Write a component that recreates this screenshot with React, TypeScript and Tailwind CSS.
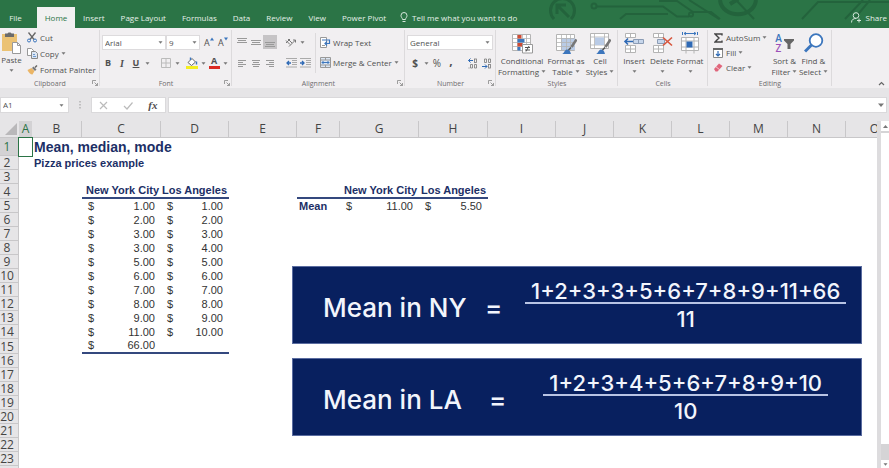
import React from "react";

type Kids = { children?: React.ReactNode };

const Caret = () => (
  <svg width="5" height="3" viewBox="0 0 5 3" className="shrink-0" aria-hidden="true">
    <path d="M0.5 0.3h4L2.5 2.7z" fill="#777" />
  </svg>
);

const Svg = ({ w, h, children }: Kids & { w: number; h: number }) => (
  <svg width={w} height={h} viewBox={`0 0 ${w} ${h}`} fill="none" className="shrink-0" aria-hidden="true">
    {children}
  </svg>
);

const Rule = () => <span className="h-3 w-px shrink-0 bg-[#dcdadc]" />;

function Group({ label, width, launcher, children }: Kids & { label: string; width: string; launcher?: boolean }) {
  return (
    <section
      aria-label={label}
      className={`relative flex shrink-0 flex-col after:absolute after:right-0 after:top-0.5 after:h-14 after:w-px after:bg-[#dcdadc] ${width}`}
    >
      <div className="h-[52px]">{children}</div>
      <div className="text-center text-[7px] leading-[8px] text-[#6f6d6f]">{label}</div>
      {launcher && (
        <button aria-label={`${label} settings`} className="absolute bottom-0.5 right-0.5">
          <Svg w={6} h={6}>
            <path d="M0.5 4V0.5H4M2.5 2.5l3 3M5.5 3v2.5H3" stroke="#888" strokeWidth="0.8" />
          </Svg>
        </button>
      )}
    </section>
  );
}

function Icon({ label, active, children }: Kids & { label: string; active?: boolean }) {
  return (
    <button
      aria-label={label}
      className={`flex h-3.5 w-3.5 shrink-0 items-center justify-center ${active ? "bg-[#c6c4c6]" : ""}`}
    >
      {children}
    </button>
  );
}

const MoreButton = ({ label }: { label: string }) => (
  <button aria-label={label} className="flex h-3.5 w-2 shrink-0 items-center justify-center">
    <Caret />
  </button>
);

function Small({ icon, text, caret }: { icon: React.ReactNode; text: string; caret?: boolean }) {
  return (
    <button className="flex h-[15px] items-center gap-0.5 whitespace-nowrap">
      <span className="flex w-3 shrink-0 justify-center">{icon}</span>
      <span>{text}</span>
      {caret && <Caret />}
    </button>
  );
}

function Big({ icon, top, bottom, width }: { icon: React.ReactNode; top: string; bottom?: string; width: string }) {
  return (
    <button className={`flex flex-col items-center whitespace-nowrap ${width}`}>
      <span className="flex h-6 items-center">{icon}</span>
      <span className="leading-[11px]">{top}</span>
      <span className="flex h-[11px] items-center justify-center gap-0.5 leading-[11px]">
        {bottom}
        <Caret />
      </span>
    </button>
  );
}

function Picker({ label, value, width }: { label: string; value: string; width: string }) {
  return (
    <div className={`relative h-[15px] border border-[#dddbdd] bg-white ${width}`}>
      <select aria-label={label} defaultValue={value} className="block h-full w-full appearance-none bg-transparent pl-0.5 leading-[13px]">
        <option>{value}</option>
      </select>
      <span className="pointer-events-none absolute right-0.5 top-[5px]">
        <Caret />
      </span>
    </div>
  );
}

const Lines = ({ d }: { d: string }) => (
  <Svg w={10} h={9}>
    <path d={d} stroke="#999" />
  </Svg>
);

const Grid = ({ accent, children }: Kids & { accent?: string }) => (
  <Svg w={22} h={22}>
    <path d="M1.5 2.5h18v16h-18z" fill="#fff" stroke="#b4b4b4" />
    {accent && <path d={accent} fill="#b9cbe6" />}
    <path d="M1.5 6.5h18M1.5 10.5h18M1.5 14.5h18M6.5 2.5v16M11.5 2.5v16M15.5 2.5v16" stroke="#b4b4b4" strokeWidth="0.8" />
    {children}
  </Svg>
);

const Brush = () => (
  <>
    <path d="M21.5 7.5l-5 7.5" stroke="#777" strokeWidth="2.6" />
    <path d="M7 22c2 0 2-4 5-4.500 2 0 3 1 4 4.500z" fill="#3c76bd" />
    <path d="M16 15.500l-2.500 2.500" stroke="#555" strokeWidth="1.600" />
  </>
);

function Clipboard() {
  return (
    <Group label="Clipboard" width="w-[100px]" launcher>
      <div className="flex pt-0.5">
        <button className="flex w-[23px] flex-col items-center pt-0.5">
          <Svg w={21} h={22}>
            <path d="M1 2h15v17H1z" fill="#ebc274" />
            <path d="M4 1.500h2.500C6.500 0 10.500 0 10.500 1.500H13V5H4z" fill="#6b6b6b" />
            <path d="M11.500 10.500h5l3 3v8h-8z" fill="#fff" stroke="#999" />
            <path d="M16.500 10.500v3h3" stroke="#999" />
          </Svg>
          <span className="leading-[11px]">Paste</span>
          <span className="flex h-2.5 items-center"><Caret /></span>
        </button>
        <div className="ml-[3px] flex flex-col gap-px">
          <Small
            text="Cut"
            icon={
              <Svg w={10} h={11}>
                <path d="M1.500 0.500L7 7.500M8.500 0.500L3 7.500" stroke="#666" strokeWidth="1.300" />
                <circle cx="2" cy="8.500" r="1.500" stroke="#3c76bd" />
                <circle cx="8" cy="8.500" r="1.500" stroke="#3c76bd" />
              </Svg>
            }
          />
          <Small
            text="Copy"
            icon={
              <Svg w={11} h={11}>
                <path d="M0.500 0.500h4l2 2v5h-6z" fill="#fff" stroke="#999" />
                <path d="M4.500 3.500h4l2 2v5h-6z" fill="#dbe6f4" stroke="#888" />
                <path d="M6 6.500h2M6 8.500h3" stroke="#3c76bd" strokeWidth="0.700" />
              </Svg>
            }
            caret
          />
          <Small
            text="Format Painter"
            icon={
              <Svg w={11} h={10}>
                <path d="M0.500 5l4-2 3 3-2 3.500c-2 0-4-2-5-4.500z" fill="#ebb566" />
                <path d="M5 3l1.500-1.500 3 3L8 6z" fill="#777" />
                <path d="M8 2.500L10 0.500" stroke="#666" strokeWidth="1.500" />
              </Svg>
            }
          />
        </div>
      </div>
    </Group>
  );
}

function FontGroup() {
  return (
    <Group label="Font" width="w-[132px]" launcher>
      <div className="flex items-center pl-0.5 pt-[7px]">
        <Picker label="Font name" value="Arial" width="w-16" />
        <Picker label="Font size" value="9" width="w-[34px]" />
        <button aria-label="Increase font size" className="ml-1 flex w-3.5 items-start text-[9px] leading-3">
          A
          <Svg w={4} h={4}><path d="M0 3.500h4L2 0.500z" fill="#3c76bd" /></Svg>
        </button>
        <button aria-label="Decrease font size" className="flex w-3.5 items-start text-[9px] leading-3">
          A
          <Svg w={4} h={4}><path d="M0 0.500h4L2 3.500z" fill="#3c76bd" /></Svg>
        </button>
      </div>
      <div className="flex items-center pl-px pt-1.5 text-[9px]">
        <Icon label="Bold"><b>B</b></Icon>
        <Icon label="Italic"><b className="font-['Liberation_Serif',serif] text-[10px] italic">I</b></Icon>
        <Icon label="Underline"><b className="underline">U</b></Icon>
        <MoreButton label="Underline styles" />
        <span className="mx-1"><Rule /></span>
        <Icon label="Borders">
          <Svg w={10} h={10}>
            <path d="M0.500 0.500h9v9h-9zM5 0.500v9M0.500 5h9" stroke="#bbb" />
          </Svg>
        </Icon>
        <MoreButton label="Border styles" />
        <span className="w-1" />
        <Icon label="Fill color">
          <Svg w={12} h={12}>
            <path d="M2 5.500L6 1.500l3.500 3.500L5.500 8.500z" fill="#fff" stroke="#666" />
            <path d="M4.500 3V0.500M10.500 4.500v3" stroke="#3c76bd" strokeWidth="1.400" />
            <path d="M0 9h12v3H0z" fill="#f4ee1f" />
          </Svg>
        </Icon>
        <MoreButton label="More fill colors" />
        <button aria-label="Font color" className="flex h-3.5 w-3.5 flex-col items-center font-bold leading-[10px]">
          A<span className="h-[3px] w-[11px] bg-[#dc2a22]" />
        </button>
        <MoreButton label="More font colors" />
      </div>
    </Group>
  );
}

function Alignment() {
  return (
    <Group label="Alignment" width="w-[173px]" launcher>
      <div className="flex gap-[3px] pl-[3px] pt-[7px]">
        <div className="flex flex-col gap-[7px]">
          <div className="flex items-center">
            <Icon label="Top align"><Lines d="M0 0.500h10M1 2.500h8M0 4.500h10" /></Icon>
            <Icon label="Middle align"><Lines d="M0 2.500h10M1 4.500h8M0 6.500h10" /></Icon>
            <Icon label="Bottom align" active><Lines d="M0 4.500h10M1 6.500h8M0 8.500h10" /></Icon>
            <span className="ml-[3px] mr-1"><Rule /></span>
            <Icon label="Orientation">
              <Svg w={12} h={11}>
                <path d="M1 3.500l4 4M3 2l4 4M1 6l4-4M4 9.500l6.500-6.500M8 3h2.500v2.500" stroke="#777" />
              </Svg>
            </Icon>
            <MoreButton label="Orientation options" />
          </div>
          <div className="flex items-center">
            <Icon label="Align left"><Lines d="M1 1.500h8M1 3.500h5M1 5.500h8M1 7.500h5" /></Icon>
            <Icon label="Center"><Lines d="M1 1.500h8M2 3.500h6M1 5.500h8M2 7.500h6" /></Icon>
            <Icon label="Align right"><Lines d="M1 1.500h8M4 3.500h5M1 5.500h8M4 7.500h5" /></Icon>
            <span className="ml-[3px] mr-1"><Rule /></span>
            <Icon label="Decrease indent">
              <Svg w={11} h={10}>
                <path d="M0 0.500h11M6 2.500h5M6 4.500h5M6 6.500h5M0 9h11" stroke="#aaa" />
                <path d="M5 5H1M3 3L1 5l2 2" stroke="#2f6ab5" strokeWidth="1.300" />
              </Svg>
            </Icon>
            <Icon label="Increase indent">
              <Svg w={11} h={10}>
                <path d="M0 0.500h11M6 2.500h5M6 4.500h5M6 6.500h5M0 9h11" stroke="#aaa" />
                <path d="M0 5h4M2 3l2 2-2 2" stroke="#2f6ab5" strokeWidth="1.300" />
              </Svg>
            </Icon>
          </div>
        </div>
        <span className="-mt-0.5 h-10 w-px bg-[#dcdadc]" />
        <div className="flex flex-col gap-[5px]">
          <Small
            text="Wrap Text"
            icon={
              <Svg w={11} h={11}>
                <path d="M0.500 0.500h6v10h-6z" fill="#fff" stroke="#999" />
                <path d="M2 3h7.500v3.500H5M7 4.500l-2 2 2 2" stroke="#3c76bd" strokeWidth="1.200" />
                <path d="M2 8.500h3" stroke="#999" />
              </Svg>
            }
          />
          <Small
            text="Merge & Center"
            icon={
              <Svg w={11} h={11}>
                <path d="M0.500 0.500h10v10h-10z" fill="#dbe6f4" stroke="#999" />
                <path d="M0.500 3h10M0.500 8h10M5.500 0.500V3M5.500 8v2.500" stroke="#999" />
                <path d="M2 5.500h7M3.500 4L2 5.500 3.500 7M7.500 4L9 5.500 7.500 7" stroke="#3c76bd" />
              </Svg>
            }
            caret
          />
        </div>
      </div>
    </Group>
  );
}

function NumberGroup() {
  return (
    <Group label="Number" width="w-[91px]" launcher>
      <div className="pl-0.5 pt-[7px]">
        <Picker label="Number format" value="General" width="w-[86px]" />
      </div>
      <div className="flex items-center pl-[3px] pt-1.5 text-[10px]">
        <Icon label="Currency"><b>$</b></Icon>
        <MoreButton label="Currencies" />
        <Icon label="Percent">%</Icon>
        <Icon label="Comma style"><b className="-mt-1 text-xs">,</b></Icon>
        <span className="mx-1"><Rule /></span>
        <Icon label="Increase decimal">
          <Svg w={10} h={11}>
            <path d="M5 2.500H0.500M2.500 0.500l-2 2 2 2" stroke="#2f6ab5" />
            <rect x="6.500" y="1" width="2" height="3.500" stroke="#777" strokeWidth="0.800" />
            <path d="M2.500 6.500h2v3.500h-2zM6.500 6.500h2v3.500h-2zM0.500 10h1" stroke="#777" strokeWidth="0.800" />
          </Svg>
        </Icon>
        <Icon label="Decrease decimal">
          <Svg w={10} h={11}>
            <path d="M2.500 1h2v3.500h-2zM6.500 1h2v3.500h-2z" stroke="#777" strokeWidth="0.800" />
            <path d="M0 8.500h5M3 6.500l2 2-2 2" stroke="#2f6ab5" />
            <rect x="6.500" y="6.500" width="2" height="3.500" stroke="#777" strokeWidth="0.800" />
          </Svg>
        </Icon>
      </div>
    </Group>
  );
}

function Styles() {
  return (
    <Group label="Styles" width="w-[122px]">
      <div className="flex pl-px pt-[3px]">
        <Big
          width="w-[50px]"
          top="Conditional"
          bottom="Formatting"
          icon={
            <Grid>
              <path d="M6.500 3h4v3.500h-4z" fill="#cf4a33" />
              <path d="M6.500 7h7v3.500h-7z" fill="#3c76bd" />
              <path d="M6.500 11h5v3.500h-5z" fill="#cf4a33" />
              <path d="M6.500 15h3v3.500h-3z" fill="#3c76bd" />
              <path d="M11.500 12.500h10v8.500h-10z" fill="#fff" stroke="#999" />
              <path d="M14 15.500h5M14 18h5M18 14l-3 5.500" stroke="#555" />
            </Grid>
          }
        />
        <Big width="w-[38px]" top="Format as" bottom="Table" icon={<Grid accent="M6 6h14v12H6z"><Brush /></Grid>} />
        <Big
          width="w-[30px]"
          top="Cell"
          bottom="Styles"
          icon={
            <Svg w={22} h={22}>
              <path d="M1.500 1.500h18v15h-18z" fill="#fff" stroke="#b4b4b4" />
              <path d="M1.500 5h18M1.500 13h18M5.500 1.500v15M15.500 1.500v15" stroke="#b4b4b4" strokeWidth="0.800" />
              <path d="M6 5.500h9v7.500H6z" fill="#b9cbe6" />
              <Brush />
            </Svg>
          }
        />
      </div>
    </Group>
  );
}

const SplitCells = ({ children }: Kids) => (
  <Svg w={22} h={20}>
    <path d="M2.500 0.500h10v4h-10zM7.500 0.500v4M2.500 12.500h10v7h-10zM7.500 12.500v7M2.500 16h10" fill="#fff" stroke="#b4b4b4" />
    {children}
  </Svg>
);

function Cells() {
  return (
    <Group label="Cells" width="w-[90px]">
      <div className="flex pl-0.5 pt-[3px]">
        <Big
          width="w-7"
          top="Insert"
          icon={
            <SplitCells>
              <path d="M10.500 6.500h10v4h-10zM15.500 6.500v4" fill="#c7d6eb" stroke="#8b9cb5" />
              <path d="M10 8.500H2M5 5.500l-3 3 3 3" stroke="#2f6ab5" strokeWidth="1.600" />
            </SplitCells>
          }
        />
        <Big
          width="w-7"
          top="Delete"
          icon={
            <SplitCells>
              <path d="M6.500 6.500h7v4h-7z" fill="#c7d6eb" stroke="#8b9cb5" />
              <path d="M12 4.500l9 8M21 4.500l-9 8" stroke="#d7543c" strokeWidth="1.600" />
            </SplitCells>
          }
        />
        <Big
          width="w-7"
          top="Format"
          icon={
            <Svg w={20} h={22}>
              <path d="M1.500 5.500h17v13h-17zM1.500 9h17M1.500 15h17M6 5.500v16M14 5.500v16" fill="#fff" stroke="#b4b4b4" />
              <path d="M4 1.500h12M6 0L4 1.500 6 3M14 0l2 1.500L14 3M2.500 0v3M17.500 0v3" stroke="#3c76bd" />
              <path d="M6.500 9.500h6v6h-6z" fill="#2f6ab5" />
            </Svg>
          }
        />
      </div>
    </Group>
  );
}

function Editing() {
  return (
    <Group label="Editing" width="w-[124px]">
      <div className="flex pl-1 pt-0.5">
        <div className="flex w-[58px] flex-col">
          <Small
            text="AutoSum"
            icon={
              <Svg w={9} h={10}>
                <path d="M8 2.500V1H1l4 4-4 4h7V7.500" stroke="#444" strokeWidth="1.400" />
              </Svg>
            }
            caret
          />
          <Small
            text="Fill"
            icon={
              <Svg w={10} h={10}>
                <path d="M0.500 0.500h9v9h-9z" fill="#fff" stroke="#888" />
                <path d="M0 1h10" stroke="#666" strokeWidth="2" />
                <path d="M5 3v5M3 6l2 2 2-2" stroke="#2f6ab5" strokeWidth="1.200" />
              </Svg>
            }
            caret
          />
          <Small
            text="Clear"
            icon={
              <Svg w={10} h={9}>
                <path d="M1 6l5-5.500 3.500 2.500-5 5.500H2.500z" fill="#e0667c" />
                <path d="M3 3.800l3.500 2.800" stroke="#fbe6ea" strokeWidth="0.800" />
              </Svg>
            }
            caret
          />
        </div>
        <div className="flex pt-px">
          <Big
            width="w-[29px]"
            top="Sort &"
            bottom="Filter"
            icon={
              <span className="flex items-center gap-0.5">
                <span className="flex flex-col text-[10px] font-semibold leading-[10px]">
                  <span className="text-[#3c76bd]">A</span>
                  <span className="text-[#9b4fb8]">Z</span>
                </span>
                <Svg w={10} h={11}>
                  <path d="M0 1h10v1.500L6.500 6v5h-3V6L0 2.500z" fill="#666" />
                </Svg>
              </span>
            }
          />
          <Big
            width="w-[29px]"
            top="Find &"
            bottom="Select"
            icon={
              <Svg w={20} h={20}>
                <circle cx="12" cy="7.500" r="6.300" fill="#fff" stroke="#3c76bd" strokeWidth="1.800" />
                <path d="M7.500 12L1 18.500" stroke="#3c76bd" strokeWidth="3" />
              </Svg>
            }
          />
        </div>
      </div>
    </Group>
  );
}

const tabs = ["Insert", "Page Layout", "Formulas", "Data", "Review", "View", "Power Pivot"];

function TabBar() {
  return (
    <header className="relative flex h-7 shrink-0 items-end overflow-hidden bg-[#2b7446] text-[#e4f0e8]">
      <svg className="absolute right-0 top-0" width="349" height="20" viewBox="0 0 349 20" fill="none" stroke="#23633c" strokeWidth="2" aria-hidden="true">
        <path d="M14 19a12 12 0 1 1 17 0" strokeWidth="3" />
        <path d="M29 17L17 5M17 14V5h9" strokeWidth="3" />
        <circle cx="54" cy="6" r="2.500" />
        <path d="M57 6.500h66l14 10h12M80 19l6-5h42M119 1h18l16 11h18l9 7M149 0l30 19M196 0l18 19" />
        <circle cx="151" cy="14.500" r="2" />
        <path d="M180 0c2 19 34 19 36 0M190 4l8-5" strokeWidth="4" />
        <path d="M262 19l16-17h71M305 19l18-19M314 19l16-19" />
      </svg>
      <nav className="relative flex h-[21px] items-center">
        <button className="h-full w-[37px] pr-1.5">File</button>
        <button className="h-full w-[38px] bg-[#f1f0f1] text-[#2b7446]">Home</button>
        {tabs.map((t) => (
          <button key={t} className="h-full whitespace-nowrap px-2">{t}</button>
        ))}
        <button className="flex h-full items-center gap-1 whitespace-nowrap pl-1.5">
          <Svg w={8} h={11}>
            <path d="M2.500 7.500C2.500 6 1 5.500 1 3.500a3 3 0 0 1 6 0C7 5.500 5.500 6 5.500 7.500zM2.500 9.500h3" stroke="#d5e7db" />
          </Svg>
          Tell me what you want to do
        </button>
      </nav>
      <button className="relative ml-auto flex h-[21px] items-center gap-1 pr-0.5">
        <Svg w={11} h={11}>
          <circle cx="5" cy="3.500" r="2.800" stroke="#d5e7db" />
          <path d="M0.500 10.500c0-3 2-4 4.500-4M8 6.500v4M6 8.500h4" stroke="#d5e7db" />
        </Svg>
        Share
      </button>
    </header>
  );
}

function FormulaBar() {
  return (
    <div className="flex h-4 shrink-0 items-stretch">
      <div className="flex w-[69px] items-center border border-[#dad9db] bg-white pr-1">
        <input aria-label="Name box" defaultValue="A1" className="min-w-0 flex-1 bg-transparent pl-0.5" />
        <Caret />
      </div>
      <div className="flex w-[22px] items-center justify-center">
        <Svg w={2} h={8}>
          <path d="M1 0v1.500M1 3v1.500M1 6v1.500" stroke="#999" />
        </Svg>
      </div>
      <div className="flex w-[75px] items-center justify-around border border-[#dad9db] bg-white">
        <button aria-label="Cancel">
          <Svg w={9} h={9}><path d="M1 1l7 7M8 1L1 8" stroke="#bbb" strokeWidth="1.200" /></Svg>
        </button>
        <button aria-label="Enter">
          <Svg w={10} h={9}><path d="M1 5l3 3 5.500-6.500" stroke="#bbb" strokeWidth="1.200" /></Svg>
        </button>
        <button aria-label="Insert function" className="font-['Liberation_Serif',serif] text-[11px] font-bold italic leading-3">
          fx
        </button>
      </div>
      <div className="ml-0.5 mr-0.5 flex flex-1 items-center border border-[#dad9db] bg-white pr-0.5">
        <input aria-label="Formula" className="min-w-0 flex-1 bg-transparent px-1" />
        <button aria-label="Expand formula bar">
          <Svg w={6} h={4}><path d="M0 0.500h6L3 4z" fill="#777" /></Svg>
        </button>
      </div>
    </div>
  );
}

const columns: [string, string][] = [
  ["A", "w-[13px]"],
  ["B", "w-[50px]"],
  ["C", "w-[79px]"],
  ["D", "w-[68px]"],
  ["E", "w-[68px]"],
  ["F", "w-[43px]"],
  ["G", "w-[79px]"],
  ["H", "w-[69px]"],
  ["I", "w-[68px]"],
  ["J", "w-[58px]"],
  ["K", "w-[58px]"],
  ["L", "w-[58px]"],
  ["M", "w-[58px]"],
  ["N", "w-[58px]"],
  ["O", "w-[58px]"],
];

const newYork = ["1.00", "2.00", "3.00", "3.00", "5.00", "6.00", "7.00", "8.00", "9.00", "11.00", "66.00"];
const losAngeles = ["1.00", "2.00", "3.00", "4.00", "5.00", "6.00", "7.00", "8.00", "9.00", "10.00"];

const Money = ({ value }: { value: string }) => (
  <span className="flex justify-between px-1.5 text-[#333]">
    <span>$</span>
    <span>{value}</span>
  </span>
);

function cell(col: string, row: number): React.ReactNode {
  if (row === 1 && col === "B") return <b className="pl-0.5 text-sm leading-4">Mean, median, mode</b>;
  if (row === 2 && col === "B") return <b className="pl-0.5">Pizza prices example</b>;
  if (row === 4 && (col === "C" || col === "G")) return <b className="block pr-0.5 text-right">New York City</b>;
  if (row === 4 && (col === "D" || col === "H")) return <b className="block pr-0.5 text-right">Los Angeles</b>;
  if (row === 5 && col === "F") return <b className="pl-0.5">Mean</b>;
  if (row === 5 && col === "G") return <Money value="11.00" />;
  if (row === 5 && col === "H") return <Money value="5.50" />;
  if (col === "C" && newYork[row - 5]) return <Money value={newYork[row - 5]} />;
  if (col === "D" && losAngeles[row - 5]) return <Money value={losAngeles[row - 5]} />;
  return null;
}

function underlined(col: string, row: number) {
  return (row === 4 && "CDFGH".includes(col)) || (row === 15 && "CD".includes(col));
}

function rowHeight(row: number) {
  if (row === 1) return "h-[18px]";
  return row === 4 || row === 15 ? "h-[15px]" : "h-3.5";
}

function Sheet() {
  return (
    <table className="w-px table-fixed border-separate border-spacing-0 font-['Liberation_Sans',Arial,sans-serif] text-[11px] leading-[13px] text-[#1c2f66]">
      <thead>
        <tr className="h-[17px] bg-[#e6e5e7] font-['Open_Sans',sans-serif] text-xs leading-4 text-[#444]">
          <th className="w-[19px] border-b border-[#c8c7c9] p-0">
            <svg className="ml-auto mr-0.5" width="12" height="12" viewBox="0 0 12 12" aria-hidden="true">
              <path d="M12 0v12H0z" fill="#b9b8ba" />
            </svg>
          </th>
          {columns.map(([name, width]) => (
            <th
              key={name}
              scope="col"
              className={`border-b p-0 font-normal ${width} ${
                name === "A" ? "border-[#2b7446] bg-[#d3d2d4] text-[#2b7446]" : "border-r border-[#c8c7c9]"
              }`}
            >
              {name}
            </th>
          ))}
        </tr>
      </thead>
      <tbody>
        {Array.from({ length: 24 }, (_, i) => i + 1).map((row) => (
          <tr key={row} className={rowHeight(row)}>
            <th
              scope="row"
              className={`border-b border-r border-[#c8c7c9] p-0 pr-1 font-['Open_Sans',sans-serif] text-xs font-normal leading-[13px] ${
                row === 1 ? "bg-[#d3d2d4] text-[#2b7446]" : "bg-[#e6e5e7] text-[#444]"
              }`}
            >
              {row}
            </th>
            {columns.map(([name]) => (
              <td
                key={name}
                className={`whitespace-nowrap p-0 ${underlined(name, row) ? "border-b-2 border-[#34487e]" : ""} ${
                  name === "A" && row === 1 ? "outline-1 outline-[#2b7446]" : ""
                }`}
              >
                {cell(name, row)}
              </td>
            ))}
          </tr>
        ))}
      </tbody>
    </table>
  );
}

function Banner({ title, top, bottom, equals }: { title: string; top: string; bottom: string; equals: string }) {
  return (
    <div className="flex h-[78px] items-center border border-[#5a6ca0] bg-[#08205f] pl-[30px] pt-1 font-['Inter',sans-serif] text-[26px] font-medium text-[#f2f5fc]">
      <span className="w-[142px] whitespace-nowrap">{title}</span>
      <span className={equals}>=</span>
      <div className="flex flex-1 flex-col items-center text-[22px] leading-[30px]">
        <span className="border-b-2 border-[#b8c4e4] px-1.5 leading-[22px]">{top}</span>
        <span>{bottom}</span>
      </div>
    </div>
  );
}

function ScrollBar() {
  return (
    <div className="flex w-3 shrink-0 flex-col border-l-4 border-[#dddcde] bg-[#d5d4d6]">
      <button aria-label="Scroll up" className="flex h-2.5 items-center justify-center bg-white">
        <Svg w={5} h={3}><path d="M0 3h5L2.500 0z" fill="#777" /></Svg>
      </button>
      <div className="mt-0.5 flex-1 bg-white" />
      <div className="h-4" />
      <button aria-label="Scroll down" className="flex h-2 items-center justify-center bg-white">
        <Caret />
      </button>
    </div>
  );
}

export default function App() {
  return (
    <div className="flex h-screen flex-col overflow-hidden bg-[#e6e5e7] font-['Open_Sans',sans-serif] text-[8px] text-[#505050]">
      <TabBar />
      <div className="flex h-[60px] shrink-0 bg-[#f1eff1]">
        <Clipboard />
        <FontGroup />
        <Alignment />
        <NumberGroup />
        <Styles />
        <Cells />
        <Editing />
        <button aria-label="Collapse ribbon" className="mb-0.5 ml-auto mr-1 self-end">
          <Svg w={7} h={5}><path d="M1 4l2.500-2.500L6 4" stroke="#666" strokeWidth="1.200" /></Svg>
        </button>
      </div>
      <div className="h-[9px] shrink-0" />
      <FormulaBar />
      <main className="flex min-h-0 flex-1 pt-2">
        <div className="relative min-w-0 flex-1 overflow-hidden bg-white">
          <Sheet />
          <div className="absolute left-[292px] right-[15px] top-[145px] flex flex-col gap-3.5">
            <Banner title="Mean in NY" top="1+2+3+3+5+6+7+8+9+11+66" bottom="11" equals="ml-5 mr-2" />
            <Banner title="Mean in LA" top="1+2+3+4+5+6+7+8+9+10" bottom="10" equals="ml-6 mr-1" />
          </div>
        </div>
        <ScrollBar />
      </main>
    </div>
  );
}
